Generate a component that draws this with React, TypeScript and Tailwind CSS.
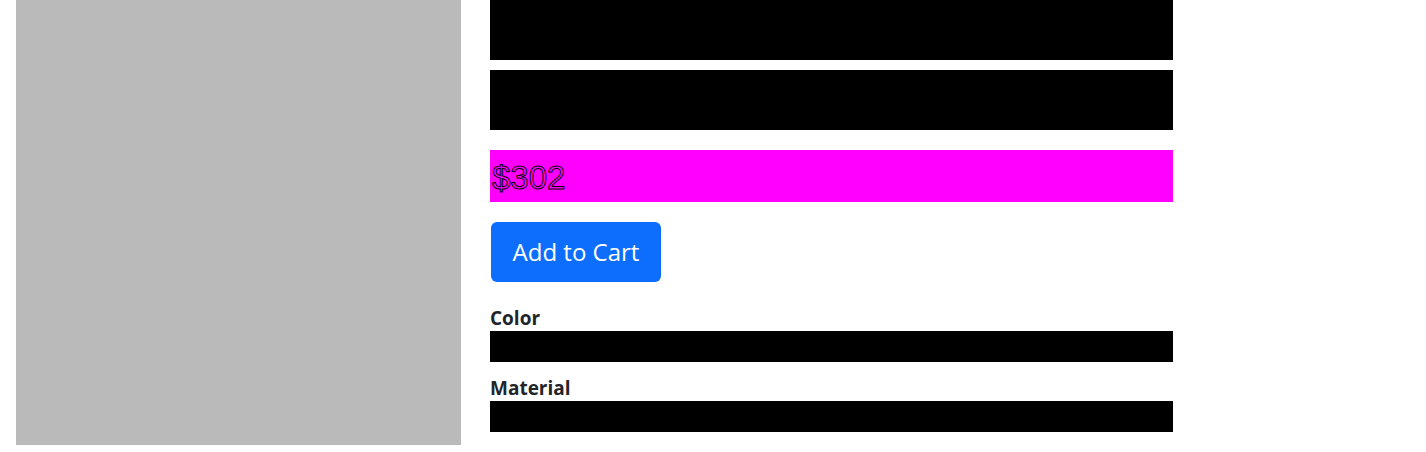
const App = () => {
  return (
    <div className="min-h-screen bg-white px-4 text-[#212529]" style={{ fontFamily: '"Open Sans", "Noto Sans", sans-serif' }}>
      <div className="flex gap-[29px]">
        {/* Product image placeholder */}
        <div className="w-[445px] h-[445px] bg-[#bababa] shrink-0" />

        {/* Details column */}
        <div className="w-[683px] flex flex-col">
          <div className="h-[60px] bg-black" />
          <div className="h-[60px] bg-black mt-[10px]" />

          <div className="h-[52px] bg-[#ff00ff] mt-[20px] flex items-center">
            <span
              className="text-[33px] leading-none pl-[2px] pt-[3px] text-transparent"
              style={{ fontFamily: '"Liberation Sans", sans-serif', WebkitTextStroke: '1px #000' }}
            >
              $302
            </span>
          </div>

          <div className="mt-[20px]">
            <button className="h-[60px] w-[170px] ml-px rounded-[6px] bg-[#0d6efd] text-white text-[24px]">
              Add to Cart
            </button>
          </div>

          <div className="mt-[26px] text-[19px] font-bold leading-[21px] pb-[2px]">Color</div>
          <div className="h-[31px] bg-black" />

          <div className="mt-[16px] text-[19px] font-bold leading-[21px] pb-[2px]">Material</div>
          <div className="h-[31px] bg-black" />
        </div>
      </div>
    </div>
  );
};

export default App;
